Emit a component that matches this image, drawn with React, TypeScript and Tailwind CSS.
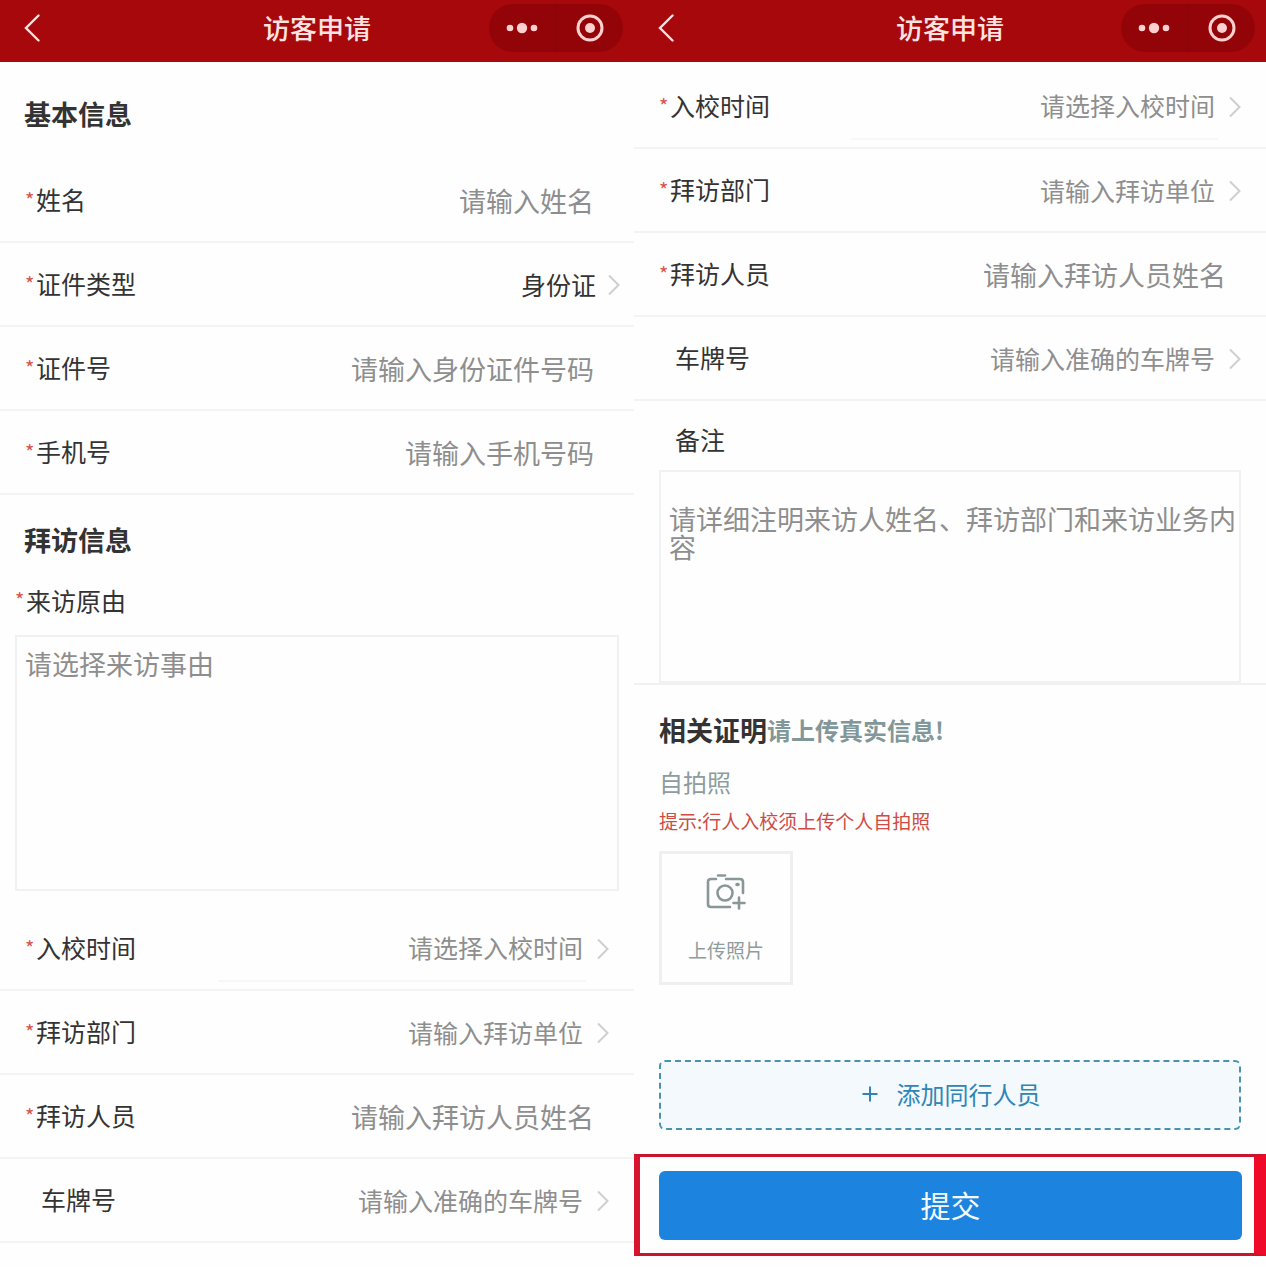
import React from "react";

type Kind = "input" | "link" | "select" | "time";

interface RowProps {
  id: string;
  label: string;
  placeholder: string;
  kind: Kind;
  required?: boolean;
}

function Star() {
  return (
    <span aria-hidden="true" className="w-[11px] shrink-0 text-[20px] leading-[36px] text-[#d9534a]">
      *
    </span>
  );
}

function Chevron() {
  return (
    <svg viewBox="0 0 12 22" className="h-[22px] w-3 shrink-0" fill="none" stroke="#cfcfcf" strokeWidth="2" aria-hidden="true">
      <path d="M1 1.5 10.5 11 1 20.5" />
    </svg>
  );
}

function Control({ id, kind, placeholder }: { id: string; kind: Kind; placeholder: string }) {
  if (kind === "select") {
    return (
      <select
        id={id}
        className="ml-auto h-[68px] flex-1 appearance-none bg-transparent pt-0.5 pr-px text-right text-[25px] text-[#333] outline-none [text-align-last:right]"
      >
        <option>{placeholder}</option>
      </select>
    );
  }
  if (kind === "time") {
    return (
      <select
        id={id}
        className="ml-auto h-[68px] w-[63%] appearance-none border-b-2 border-[#f7f7f7] bg-transparent pt-0.5 pr-[3px] text-right text-[25px] text-[#8e8e8e] outline-none [text-align-last:right]"
      >
        <option>{placeholder}</option>
      </select>
    );
  }
  return kind === "link" ? (
    <input
      id={id}
      placeholder={placeholder}
      className="h-[68px] min-w-0 flex-1 bg-transparent pr-[3px] text-right text-[25px] outline-none placeholder:text-[#8e8e8e]"
    />
  ) : (
    <input
      id={id}
      placeholder={placeholder}
      className="h-[68px] min-w-0 flex-1 bg-transparent text-right text-[27px] outline-none placeholder:text-[#8e8e8e]"
    />
  );
}

const rowPadding: Record<Kind, string> = {
  input: "pr-10",
  link: "pr-[25px]",
  select: "pr-[14px]",
  time: "pr-[25px]",
};

function Row({ id, label, placeholder, kind, required = true }: RowProps) {
  return (
    <div className={`flex h-[84px] items-center border-b-2 border-[#f3f3f3] pl-[25px] ${rowPadding[kind]}`}>
      {required ? <Star /> : <span className="w-4 shrink-0" />}
      <label htmlFor={id} className="shrink-0 pb-[3px] text-[25px] leading-[36px]">
        {label}
      </label>
      <Control id={id} kind={kind} placeholder={placeholder} />
      {kind !== "input" && (
        <span className="flex pt-0.5 pl-[11px]">
          <Chevron />
        </span>
      )}
    </div>
  );
}

function VisitRows({ prefix }: { prefix: string }) {
  return (
    <>
      <Row id={`${prefix}-time`} label="入校时间" placeholder="请选择入校时间" kind="time" />
      <Row id={`${prefix}-dept`} label="拜访部门" placeholder="请输入拜访单位" kind="link" />
      <Row id={`${prefix}-person`} label="拜访人员" placeholder="请输入拜访人员姓名" kind="input" />
      <Row id={`${prefix}-plate`} label="车牌号" placeholder="请输入准确的车牌号" kind="link" required={false} />
    </>
  );
}

function Header() {
  return (
    <header className="grid h-[62px] grid-cols-[1fr_auto_1fr] items-center bg-[#a6080b] pb-[7px] text-[#ffe3e0]">
      <button type="button" aria-label="返回" className="ml-6 w-fit">
        <svg viewBox="0 0 16 28" className="h-7 w-4" fill="none" stroke="currentColor" strokeWidth="2.4" strokeLinecap="round">
          <path d="M14.5 1.5 2 14l12.500 12.500" />
        </svg>
      </button>
      <h1 className="text-[27px] leading-[40px] font-medium">访客申请</h1>
      <div className="mr-[11px] flex h-12 w-[134px] items-center justify-self-end rounded-full bg-[#930409]">
        <button type="button" aria-label="更多" className="flex h-full flex-1 items-center justify-center border-r border-[#8a0308]">
          <svg viewBox="0 0 32 12" className="h-3 w-8" fill="#ffd0d0">
            <circle cx="4" cy="6" r="3.300" />
            <circle cx="16" cy="6" r="5.200" />
            <circle cx="28" cy="6" r="3.300" />
          </svg>
        </button>
        <button type="button" aria-label="关闭" className="flex h-full flex-1 items-center justify-center">
          <svg viewBox="0 0 28 28" className="h-7 w-7" fill="none">
            <circle cx="14" cy="14" r="12" stroke="#ffd0d0" strokeWidth="3" />
            <circle cx="14" cy="14" r="5" fill="#ffd0d0" />
          </svg>
        </button>
      </div>
    </header>
  );
}

function CameraIcon() {
  return (
    <svg viewBox="0 0 40 36" className="h-9 w-10" fill="none" stroke="#8a9799" strokeWidth="2.600" strokeLinecap="round" aria-hidden="true">
      <path d="M10 5H5Q2 5 2 8v22q0 3 3 3h19" />
      <path d="M12 1.500h7" />
      <path d="M20 5h14q3 0 3 3v11" />
      <path d="M31 10.500h1" strokeWidth="3.500" />
      <circle cx="19" cy="19" r="7.500" />
      <path d="M33 23.500v11M27.500 29h11" />
    </svg>
  );
}

function BasicScreen() {
  return (
    <section>
      <Header />
      <h2 className="px-6 pt-8 pb-[25px] text-[27px] leading-[40px] font-bold">基本信息</h2>
      <Row id="name" label="姓名" placeholder="请输入姓名" kind="input" />
      <Row id="id-type" label="证件类型" placeholder="身份证" kind="select" />
      <Row id="id-number" label="证件号" placeholder="请输入身份证件号码" kind="input" />
      <Row id="phone" label="手机号" placeholder="请输入手机号码" kind="input" />
      <h2 className="px-6 pt-[25px] text-[27px] leading-[40px] font-bold">拜访信息</h2>
      <div className="px-[15px] pt-[22px]">
        <div className="flex items-center">
          <Star />
          <label htmlFor="reason" className="text-[25px] leading-[36px]">
            来访原由
          </label>
        </div>
        <textarea
          id="reason"
          placeholder="请选择来访事由"
          className="mt-[17px] block h-64 w-full resize-none border-2 border-[#f1f1f1] bg-transparent px-2 py-[11px] text-[27px] leading-[32px] outline-none placeholder:text-[#8e8e8e]"
        />
      </div>
      <div className="pt-4">
        <VisitRows prefix="visit" />
      </div>
    </section>
  );
}

function ProofScreen() {
  return (
    <section>
      <Header />
      <div className="pt-[3px]">
        <VisitRows prefix="confirm" />
      </div>
      <div className="border-b-2 border-[#f1f1f1] px-[25px] pt-5">
        <label htmlFor="remark" className="block pl-4 text-[25px] leading-[36px]">
          备注
        </label>
        <textarea
          id="remark"
          placeholder="请详细注明来访人姓名、拜访部门和来访业务内容"
          className="mt-[13px] block h-[213px] w-full resize-none border-2 border-[#f1f1f1] bg-transparent pt-[33px] pl-2 text-[27px] leading-[28px] outline-none placeholder:text-[#8e8e8e]"
        />
      </div>
      <div className="px-[25px] pt-[25px]">
        <h2 className="flex items-center text-[27px] leading-[40px] font-bold">
          相关证明
          <span className="text-[24px] leading-[36px] text-[#819799]">请上传真实信息!</span>
        </h2>
        <p className="pt-3.5 text-[24px] leading-[36px] text-[#8d9c9c]">自拍照</p>
        <p className="pt-[7px] text-[19px] leading-[28px] text-[#cf4b45]">提示:行人入校须上传个人自拍照</p>
        <button
          type="button"
          className="mt-4 flex h-[134px] w-[134px] flex-col items-center border-[3px] border-[#efefef] pt-5 text-[19px] leading-[28px] text-[#8d9c9c]"
        >
          <CameraIcon />
          <span className="pt-[26px]">上传照片</span>
        </button>
        <button
          type="button"
          className="mt-[75px] flex h-[70px] w-full items-center justify-center gap-[17px] rounded-md border-2 border-dashed border-[#4b92ae] bg-[#f3f9fd] pb-0.5 text-[24px] text-[#2f86b5]"
        >
          <svg viewBox="0 0 20 20" className="h-5 w-5" fill="none" stroke="currentColor" strokeWidth="2" aria-hidden="true">
            <path d="M10 2.500v15M2.500 10h15" />
          </svg>
          添加同行人员
        </button>
      </div>
      <div className="mt-6 border-y-[3px] border-r-[12px] border-l-[6px] border-y-[#c9142f] border-r-[#ee0a28] border-l-[#d9142f] pt-3.5 pr-[12px] pb-[13px] pl-[19px]">
        <button type="submit" className="h-[69px] w-full rounded-md bg-[#1c84df] pb-0.5 text-[30px] text-[#f4faff]">
          提交
        </button>
      </div>
    </section>
  );
}

export default function App() {
  return (
    <form
      onSubmit={(event: React.FormEvent) => event.preventDefault()}
      className="grid min-h-screen grid-cols-[317fr_316fr] bg-[#fefefe] font-['Noto_Sans_CJK_SC',sans-serif] text-[#333]"
    >
      <BasicScreen />
      <ProofScreen />
    </form>
  );
}
